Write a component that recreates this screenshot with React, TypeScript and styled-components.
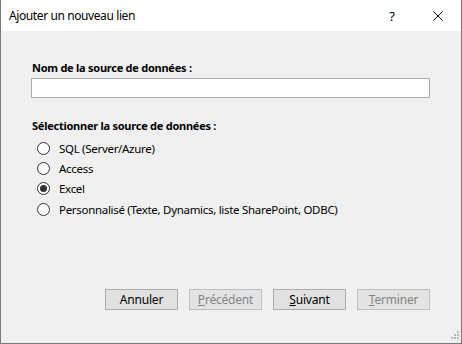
import React, { useState } from "react";
import styled, { createGlobalStyle } from "styled-components";

const GlobalStyle = createGlobalStyle`
  html, body {
    margin: 0;
    padding: 0;
    background: #ffffff;
  }
  * {
    box-sizing: border-box;
  }
`;

const Window = styled.div`
  position: relative;
  width: 462px;
  height: 344px;
  display: flex;
  flex-direction: column;
  border: 1px solid #7a7a7a;
  border-top: none;
  background: #f0f0f0;
  font-family: "Segoe UI", "Noto Sans", sans-serif;
  font-size: 11.5px;
  letter-spacing: -0.3px;
  color: #000;
`;

const TitleBar = styled.div`
  height: 31px;
  flex: 0 0 31px;
  display: flex;
  align-items: center;
  background: #ffffff;
  padding-left: 8px;
`;

const Title = styled.div`
  flex: 1;
  font-size: 12px;
  letter-spacing: -0.4px;
  line-height: 16px;
  padding-top: 1px;
`;

const TitleButton = styled.div`
  width: 46px;
  height: 31px;
  display: flex;
  align-items: center;
  justify-content: center;
  font-size: 13px;
`;

const Body = styled.div`
  flex: 1;
  display: flex;
  flex-direction: column;
  padding: 29px 31px 0 30px;
`;

const Label = styled.div`
  font-weight: bold;
  font-size: 11px;
  letter-spacing: -0.25px;
  line-height: 16px;
  padding-left: 1px;
`;

const TextInput = styled.input`
  margin-top: 2px;
  width: 399px;
  height: 20px;
  border: 1px solid #acacac;
  background: #ffffff;
  outline: none;
  font: inherit;
  padding: 0 3px;
`;

const Section = styled.div<{ $gap: number }>`
  margin-top: ${(p) => p.$gap}px;
`;

const RadioList = styled.div`
  display: flex;
  flex-direction: column;
  margin-top: 4px;
  padding-left: 6px;
`;

const RadioRow = styled.label`
  display: flex;
  align-items: center;
  height: 20.4px;
  gap: 9px;
  cursor: default;
`;

const RadioCircle = styled.span<{ $checked: boolean }>`
  width: 13px;
  height: 13px;
  border-radius: 50%;
  border: 1px solid #333333;
  background: #ffffff;
  display: flex;
  align-items: center;
  justify-content: center;
  &::after {
    content: "";
    width: 7px;
    height: 7px;
    border-radius: 50%;
    background: #333333;
    display: ${(p) => (p.$checked ? "block" : "none")};
  }
`;

const Footer = styled.div`
  display: flex;
  justify-content: flex-end;
  gap: 11px;
  padding: 0 31px 33px 0;
`;

const Button = styled.button<{ $disabled?: boolean }>`
  width: 73px;
  height: 21px;
  padding: 0;
  font: inherit;
  font-size: 12px;
  letter-spacing: -0.2px;
  background: ${(p) => (p.$disabled ? "#e3e3e3" : "#e1e1e1")};
  border: 1px solid ${(p) => (p.$disabled ? "#bfbfbf" : "#adadad")};
  color: ${(p) => (p.$disabled ? "#838383" : "#000000")};
  line-height: 18px;
  u {
    text-decoration: underline;
  }
`;

const Grip = styled.svg`
  position: absolute;
  right: 2px;
  bottom: 2px;
`;

const options = [
  "SQL (Server/Azure)",
  "Access",
  "Excel",
  "Personnalisé (Texte, Dynamics, liste SharePoint, ODBC)",
];

export default function App() {
  const [selected, setSelected] = useState(2);
  const [name, setName] = useState("");

  return (
    <>
      <GlobalStyle />
      <Window>
        <TitleBar>
          <Title>Ajouter un nouveau lien</Title>
          <TitleButton>?</TitleButton>
          <TitleButton>
            <svg width="10" height="10" viewBox="0 0 10 10">
              <path d="M0.5 0.5L9.5 9.5M9.5 0.5L0.5 9.5" stroke="#000" strokeWidth="1" />
            </svg>
          </TitleButton>
        </TitleBar>
        <Body>
          <Label>Nom de la source de données :</Label>
          <TextInput value={name} onChange={(e) => setName(e.target.value)} />
          <Section $gap={20}>
            <Label>Sélectionner la source de données :</Label>
            <RadioList>
              {options.map((opt, i) => (
                <RadioRow key={opt} onClick={() => setSelected(i)}>
                  <RadioCircle $checked={selected === i} />
                  {opt}
                </RadioRow>
              ))}
            </RadioList>
          </Section>
        </Body>
        <Footer>
          <Button>Annuler</Button>
          <Button $disabled>
            <u>P</u>récédent
          </Button>
          <Button>
            <u>S</u>uivant
          </Button>
          <Button $disabled>
            <u>T</u>erminer
          </Button>
        </Footer>
        <Grip width="10" height="10" viewBox="0 0 10 10">
          <rect x="8" y="0" width="2" height="2" fill="#b8b8b8" />
          <rect x="5" y="3" width="2" height="2" fill="#b8b8b8" />
          <rect x="8" y="3" width="2" height="2" fill="#b8b8b8" />
          <rect x="2" y="6" width="2" height="2" fill="#b8b8b8" />
          <rect x="5" y="6" width="2" height="2" fill="#b8b8b8" />
          <rect x="8" y="6" width="2" height="2" fill="#b8b8b8" />
        </Grip>
      </Window>
    </>
  );
}
